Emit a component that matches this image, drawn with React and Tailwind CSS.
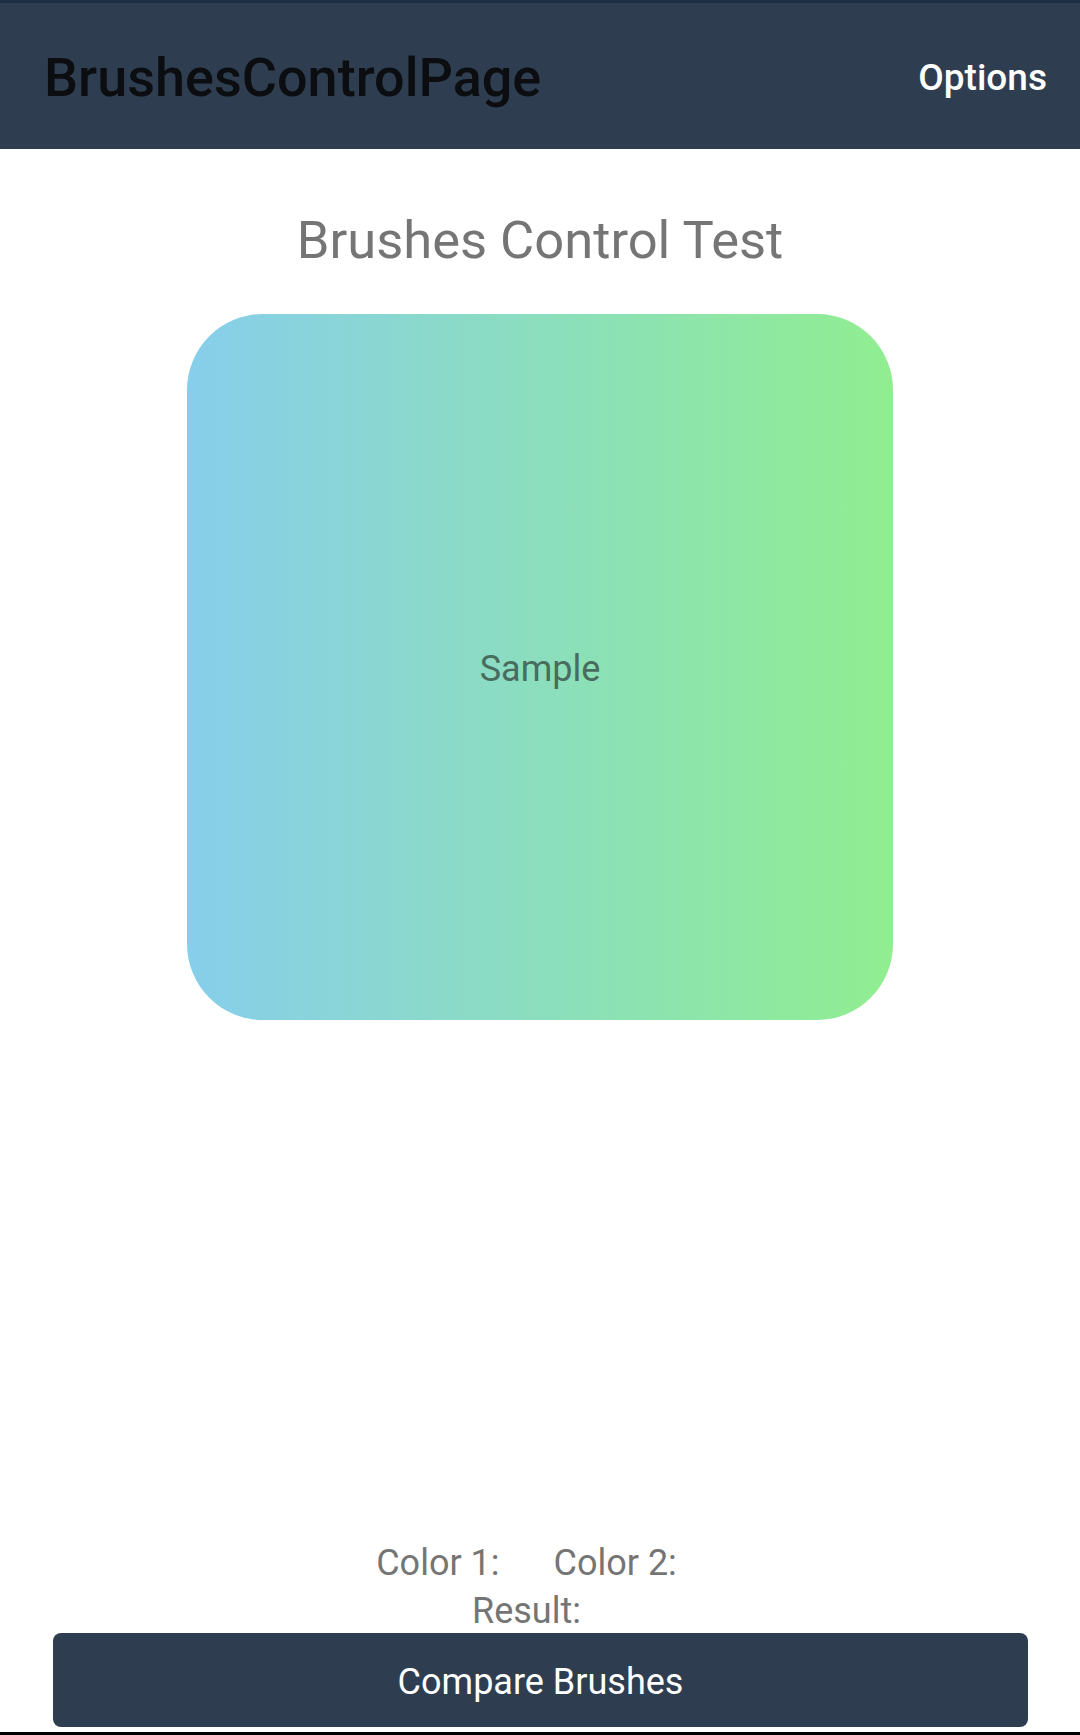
export default function App() {
  return (
    <div
      className="flex h-[1735px] w-[1080px] flex-col bg-white"
      style={{ fontFamily: 'Roboto, "Noto Sans", sans-serif' }}
    >
      <div className="h-[3px] bg-[#1c2f47]" />
      <header className="flex h-[146px] items-center justify-between bg-[#2e3e50] pl-[44px] pr-[33px]">
        <h1 className="mt-[3px] text-[54px] font-medium leading-none text-[#0b0d10]">BrushesControlPage</h1>
        <span className="mt-[2px] text-[37px] font-medium leading-none text-white">Options</span>
      </header>

      <main className="flex flex-1 flex-col items-center">
        <h2 className="mt-[61px] text-[52.5px] leading-[60px] text-[#757575]">Brushes Control Test</h2>
        <div className="mt-[44px] flex h-[706px] w-[706px] items-center justify-center rounded-[76px] bg-[linear-gradient(to_right,#87ceeb,#90ee90)]">
          <span className="mt-[4px] text-[36px] leading-none text-[#486c5e]">Sample</span>
        </div>
      </main>

      <div className="flex flex-col items-center pr-[27px] text-[36px] leading-[48px] text-[#757575]">
        <div className="flex gap-[54px] pt-[2px]">
          <span>Color 1:</span>
          <span>Color 2:</span>
        </div>
        <div className="-mb-[2px]">Result:</div>
      </div>

      <div className="pl-[53px] pr-[52px]">
        <button className="flex h-[94px] w-full items-center justify-center rounded-[8px] bg-[#2e3e50] pt-[4px] text-[36px] text-white">
          Compare Brushes
        </button>
      </div>
      <div className="h-[5px]" />
      <div className="h-[3px] bg-black" />
    </div>
  );
}
